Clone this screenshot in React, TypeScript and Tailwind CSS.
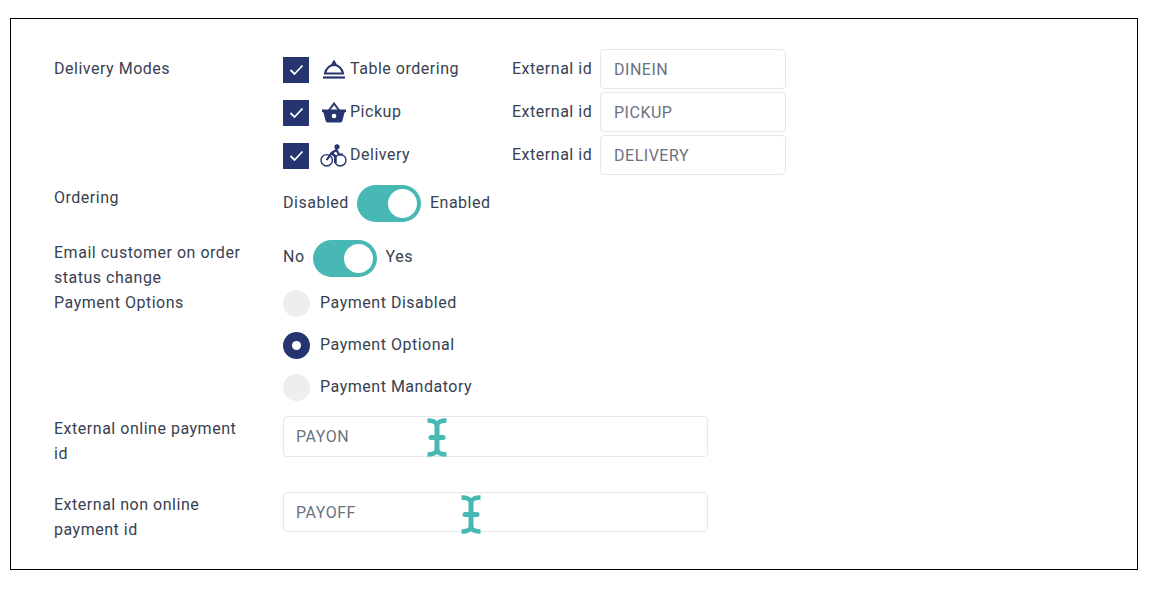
import React from "react";

const navy = "#26356f";

const DishIcon = () => (
  <svg width="24" height="20" viewBox="0 0 24 20" fill="none" stroke={navy} strokeWidth="2">
    <path d="M3 13.5 C4 8 8 5 12 5 C16 5 20 8 21 13.5 Z" />
    <path d="M10 5 L12 1.5 L14 5" />
    <path d="M1 17.5 H23" strokeWidth="2.2" />
  </svg>
);

const BasketIcon = () => (
  <svg width="24" height="21" viewBox="0 0 24 21">
    <path d="M6.5 9 L12 1.5 L17.5 9" fill="none" stroke={navy} strokeWidth="2" />
    <path
      d="M0 7.5 H24 V10 L22.5 10.5 L20.5 18.5 C20.2 19.6 19.5 20.5 18.5 20.5 H5.5 C4.5 20.5 3.8 19.6 3.5 18.5 L1.5 10.5 L0 10 Z"
      fill={navy}
    />
    <circle cx="12" cy="14" r="2.3" fill="#fff" />
  </svg>
);

const BikeIcon = () => (
  <svg width="27" height="23" viewBox="0 0 27 23" fill="none" stroke={navy}>
    <circle cx="6.7" cy="16.3" r="5.7" strokeWidth="1.4" />
    <circle cx="20.3" cy="16.3" r="5.7" strokeWidth="1.4" />
    <circle cx="17" cy="2.8" r="2.6" fill={navy} stroke="none" />
    <path d="M6.7 16 L11.5 9 L16.5 6 L19 10.5 H23" strokeWidth="2.2" strokeLinejoin="round" />
    <path d="M11.5 9 L15.5 12.5 V19" strokeWidth="2.4" strokeLinejoin="round" />
  </svg>
);

const Checkbox = () => (
  <div className="w-[26px] h-[26px] bg-[#26356f] flex items-center justify-center shrink-0">
    <svg width="15" height="12" viewBox="0 0 15 12" fill="none" stroke="#fff" strokeWidth="1.8">
      <path d="M1.5 6 L5.5 10 L13.5 1.5" />
    </svg>
  </div>
);

const Toggle = () => (
  <div className="w-[64px] h-[37px] rounded-full bg-[#47b8b4] flex items-center justify-end pr-[4px]">
    <div className="w-[29px] h-[29px] rounded-full bg-white" />
  </div>
);

const Radio = ({ on, label }: { on?: boolean; label: string }) => (
  <div className="h-[42px] flex items-center">
    {on ? (
      <div className="w-[27px] h-[27px] -mt-[1px] rounded-full bg-[#26356f] flex items-center justify-center">
        <div className="w-[9px] h-[9px] rounded-full bg-white" />
      </div>
    ) : (
      <div className="w-[27px] h-[27px] -mt-[1px] rounded-full bg-[#eeeeee]" />
    )}
    <span className="ml-[10px] -mt-[3px]">{label}</span>
  </div>
);

const TextCursor = () => (
  <svg width="20" height="39" viewBox="0 0 20 39" fill="none" stroke="#47b8b4" strokeWidth="4.5">
    <path d="M0.5 2.5 C5 2.5 8.5 3.5 10 6.5 C11.5 3.5 15 2.5 19.5 2.5" />
    <path d="M10 6 V33" strokeWidth="5" />
    <path d="M4 19.5 H16" strokeWidth="5" strokeLinecap="round" />
    <path d="M0.5 36.5 C5 36.5 8.5 35.5 10 32.5 C11.5 35.5 15 36.5 19.5 36.5" />
  </svg>
);

const modes = [
  { name: "Table ordering", icon: <DishIcon />, ext: "DINEIN" },
  { name: "Pickup", icon: <BasketIcon />, ext: "PICKUP" },
  { name: "Delivery", icon: <BikeIcon />, ext: "DELIVERY" },
];

const inputCss = "border border-[#e5e7eb] rounded-[4px] flex items-center text-[#6b7280] bg-white";

export default function App() {
  return (
    <div
      className="ml-[10px] mt-[18px] w-[1128px] h-[552px] border border-black pl-[43px] pt-[30px] text-[16px] leading-[25px] text-[#374151] tracking-[0.52px]"
      style={{ fontFamily: "Roboto, sans-serif" }}
    >
      {/* Delivery modes */}
      <div className="flex">
        <div className="w-[229px] pt-[7px]">Delivery Modes</div>
        <div className="flex flex-col gap-[2px]">
          {modes.map((m) => (
            <div key={m.name} className="flex items-center h-[41px]">
              <Checkbox />
              <div className="w-[39px] flex justify-center pl-[10px]">{m.icon}</div>
              <div className="w-[164px] pl-[2px] -mt-[2px]">{m.name}</div>
              <div className="w-[88px] -mt-[2px]">External id</div>
              <div className={`${inputCss} h-[40px] self-start pl-[13px] w-[186px]`}>{m.ext}</div>
            </div>
          ))}
        </div>
      </div>

      {/* Ordering */}
      <div className="flex mt-[9px]">
        <div className="w-[229px]">Ordering</div>
        <div className="flex items-center">
          <span className="-mt-[2px] mr-[8px]">Disabled</span>
          <Toggle />
          <span className="-mt-[2px] ml-[9px]">Enabled</span>
        </div>
      </div>

      {/* Email */}
      <div className="flex mt-[18px]">
        <div className="w-[229px] pr-[35px]">Email customer on order status change</div>
        <div className="flex items-start">
          <span className="pt-[4px] mr-[8px]">No</span>
          <Toggle />
          <span className="pt-[4px] ml-[9px]">Yes</span>
        </div>
      </div>

      {/* Payment */}
      <div className="flex">
        <div className="w-[229px]">Payment Options</div>
        <div className="flex flex-col -mt-[7px]">
          <Radio label="Payment Disabled" />
          <Radio on label="Payment Optional" />
          <Radio label="Payment Mandatory" />
        </div>
      </div>

      <div className="flex mt-[7px]">
        <div className="w-[229px] pr-[35px]">External online payment id</div>
        <div className={`${inputCss} h-[41px] pl-[12px] w-[425px] relative`}>
          PAYON
          <div className="absolute left-[143px] top-[1px]">
            <TextCursor />
          </div>
        </div>
      </div>

      <div className="flex mt-[26px]">
        <div className="w-[229px] pr-[35px]">External non online payment id</div>
        <div className={`${inputCss} h-[40px] pl-[12px] w-[425px] relative`}>
          PAYOFF
          <div className="absolute left-[177px] top-[2px]">
            <TextCursor />
          </div>
        </div>
      </div>
    </div>
  );
}
